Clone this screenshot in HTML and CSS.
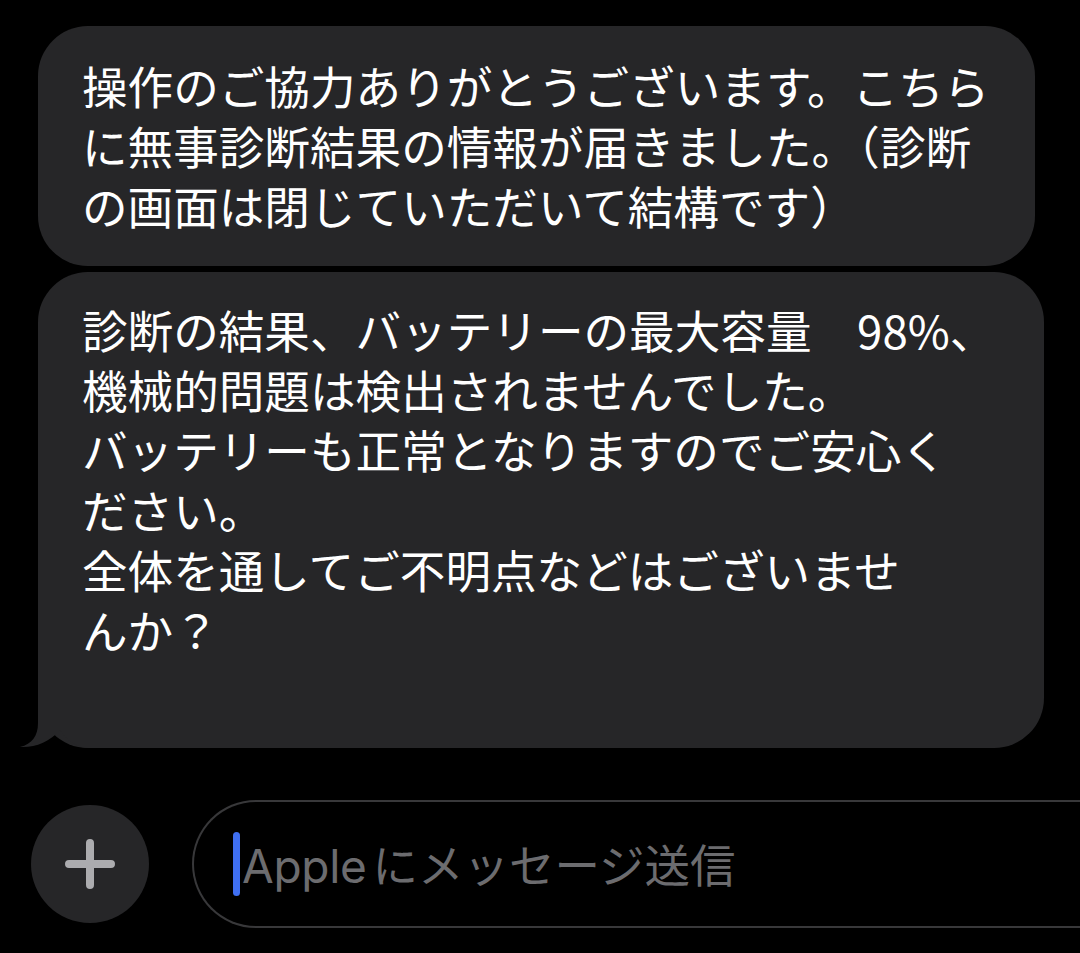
FILE: index.html
```html
<!DOCTYPE html>
<html lang="ja">
<head>
<meta charset="utf-8">
<link rel="stylesheet" href="styles.css">
</head>
<body>
<div class="screen">
  <div class="thread">
    <div class="bubble b1">操作のご協力ありがとうございます。こちら<br>に無事診断結果の情報が届きました。（診断<br>の画面は閉じていただいて結構です）</div>
    <div class="bubble b2">診断の結果、バッテリーの最大容量　98%、<br>機械的問題は検出されませんでした。<br>バッテリーも正常となりますのでご安心く<br>ださい。<br>全体を通してご不明点などはございませ<br>んか？
      <svg class="tail" width="72" height="60" viewBox="0 0 72 60"><path d="M20 0 L20 35 C20 48 14 56 2 59 C16 60 32 54 42 42 C50 54 60 60 72 60 L72 0 Z" fill="#262628"/></svg>
    </div>
  </div>
  <div class="composer">
    <div class="plus">
      <svg width="50" height="50" viewBox="0 0 50 50"><path d="M25 4 V46 M4 25 H46" stroke="#acacaf" stroke-width="8" stroke-linecap="round"/></svg>
    </div>
    <div class="field">
      <span class="cursor"></span>
      <span class="placeholder"><span class="latin">Apple</span>にメッセージ送信</span>
    </div>
  </div>
</div>
</body>
</html>
```
FILE: styles.css
```css
html, body {
  margin: 0;
  padding: 0;
  background: #000;
}
.screen {
  width: 1080px;
  height: 953px;
  overflow: hidden;
  background: #000;
  font-family: "Noto Sans CJK JP", "Noto Sans", sans-serif;
}
.thread {
  display: flex;
  flex-direction: column;
  gap: 6px;
  padding: 26px 0 0 38px;
}
.bubble {
  position: relative;
  background: #262628;
  color: #fff;
  font-size: 45.6px;
  line-height: 60px;
  white-space: nowrap;
  padding-left: 44px;
  box-sizing: border-box;
  border-radius: 50px;
}
.b1 {
  width: 997px;
  padding-top: 29px;
  padding-bottom: 31px;
}
.b2 {
  width: 1006px;
  padding-top: 27px;
  padding-bottom: 89px;
}
.tail {
  position: absolute;
  left: -20px;
  bottom: 0;
  display: block;
}
.composer {
  display: flex;
  align-items: center;
  margin-top: 52px;
  padding-left: 31px;
  gap: 43px;
}
.plus {
  width: 118px;
  height: 118px;
  border-radius: 50%;
  background: #262628;
  display: flex;
  align-items: center;
  justify-content: center;
  flex: none;
}
.field {
  flex: none;
  width: 1000px;
  height: 128px;
  box-sizing: border-box;
  border: 2px solid #38383a;
  border-right: none;
  border-radius: 64px 0 0 64px;
  display: flex;
  align-items: center;
  padding-left: 39px;
}
.cursor {
  width: 7px;
  height: 64px;
  border-radius: 4px;
  background: #3f6ff2;
  flex: none;
}
.placeholder {
  color: #6c6c6f;
  font-size: 45.5px;
  line-height: 60px;
  margin-left: 2px;
}
.latin {
  font-family: "Inter", "Noto Sans", sans-serif;
  font-size: 46px;
  letter-spacing: -0.3px;
  margin-right: 6px;
}
```
